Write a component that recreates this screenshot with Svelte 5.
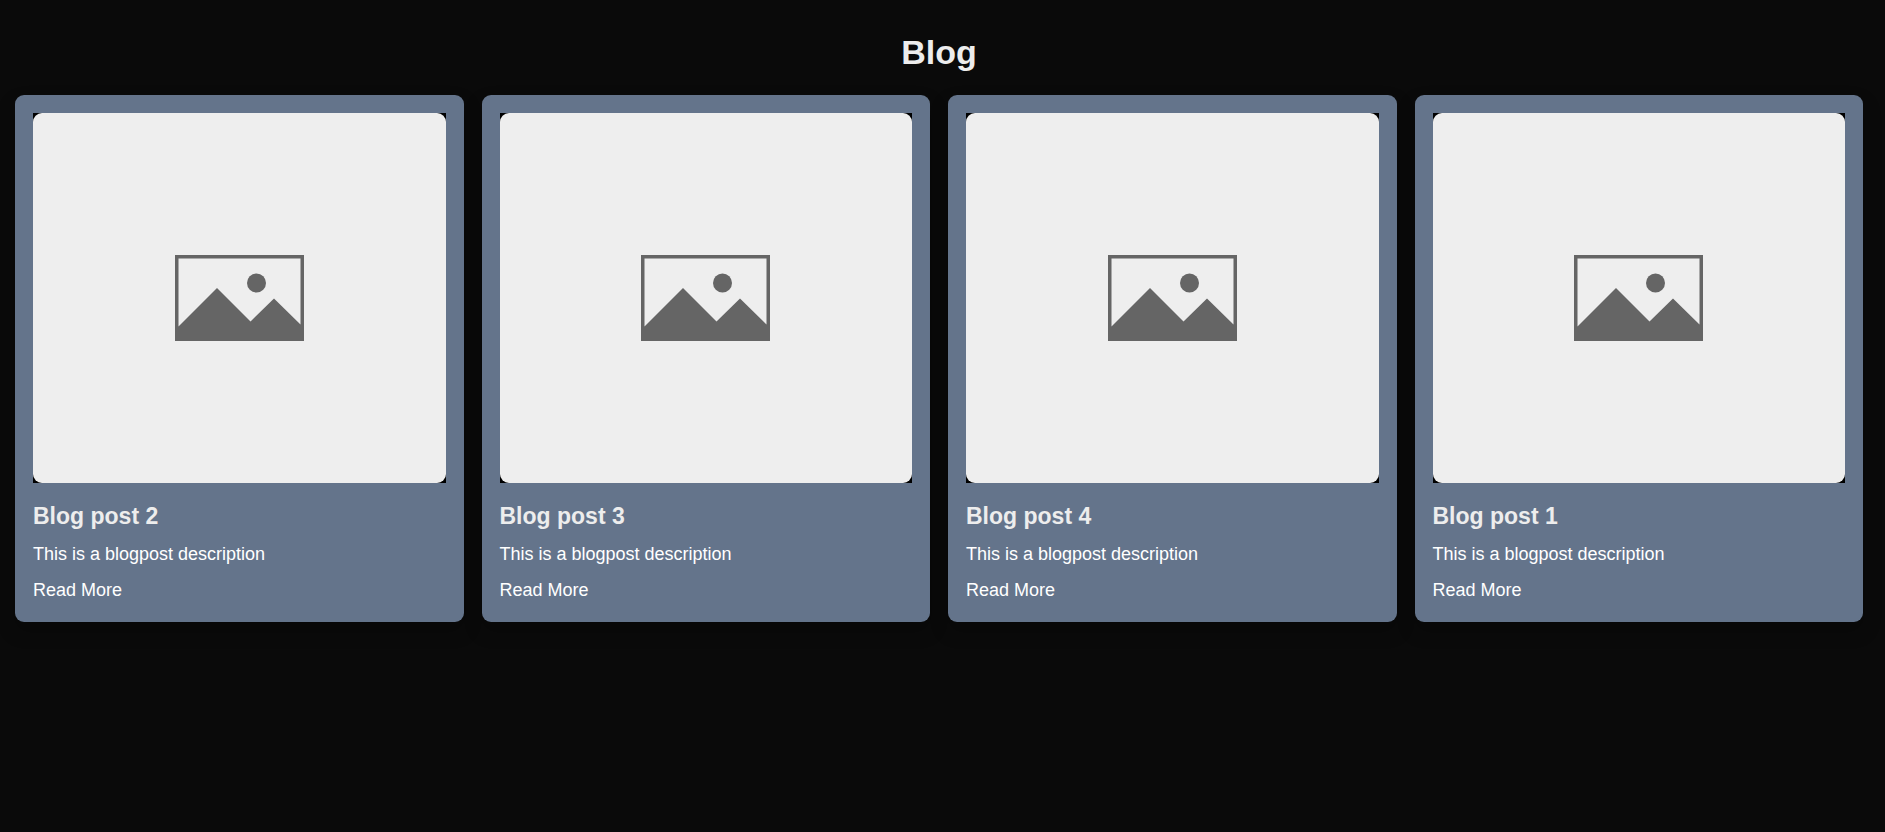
<script lang="ts">
  type Post = {
    id: number;
    title: string;
    description: string;
  };

  const posts: Post[] = [
    { id: 2, title: 'Blog post 2', description: 'This is a blogpost description' },
    { id: 3, title: 'Blog post 3', description: 'This is a blogpost description' },
    { id: 4, title: 'Blog post 4', description: 'This is a blogpost description' },
    { id: 1, title: 'Blog post 1', description: 'This is a blogpost description' },
  ];
</script>

<main class="blog">
  <h1>Blog</h1>

  <div class="posts">
    {#each posts as post (post.id)}
      <article class="card">
        <div class="thumb">
          <div class="placeholder">
            <svg width="129" height="86" viewBox="0 0 129 86" role="img" aria-label="Placeholder">
              <path
                fill="#656565"
                fill-rule="evenodd"
                d="M0 0H129V86H0ZM3.5 3.5V71.5L42 33L75.5 66.5L99 43.5L125.5 69.5V3.5Z"
              />
              <circle cx="81.5" cy="28" r="9.5" fill="#656565" />
            </svg>
          </div>
        </div>
        <h2>{post.title}</h2>
        <p>{post.description}</p>
        <a href="#post-{post.id}">Read More</a>
      </article>
    {/each}
  </div>
</main>

<style>
  :global(body) {
    margin: 0;
    background: #0a0a0a;
    color: #ededed;
    font-family: Arial, "Liberation Sans", Helvetica, sans-serif;
    font-size: 18px;
    line-height: 27px;
  }

  .blog {
    padding: 27px 22px 27px 15px;
  }

  h1 {
    margin: 0 0 18px;
    font-size: 34px;
    line-height: 50px;
    text-align: center;
  }

  .posts {
    display: grid;
    grid-template-columns: repeat(4, 1fr);
    gap: 18px;
  }

  .card {
    display: flex;
    flex-direction: column;
    gap: 9px;
    padding: 18px;
    border-radius: 9px;
    background: #64748b;
    box-shadow: 0 9px 18px rgba(0, 0, 0, 0.25);
  }

  .thumb {
    height: 370px;
    margin-bottom: 8px;
    background: #000;
  }

  .placeholder {
    display: flex;
    align-items: center;
    justify-content: center;
    height: 100%;
    border-radius: 9px;
    background: #eee;
  }

  h2 {
    margin: 0;
    font-size: 23px;
    line-height: 32px;
  }

  p {
    margin: 0;
    color: #fff;
  }

  a {
    align-self: flex-start;
    color: #fff;
    text-decoration: none;
  }

  a:hover {
    text-decoration: underline;
  }
</style>
